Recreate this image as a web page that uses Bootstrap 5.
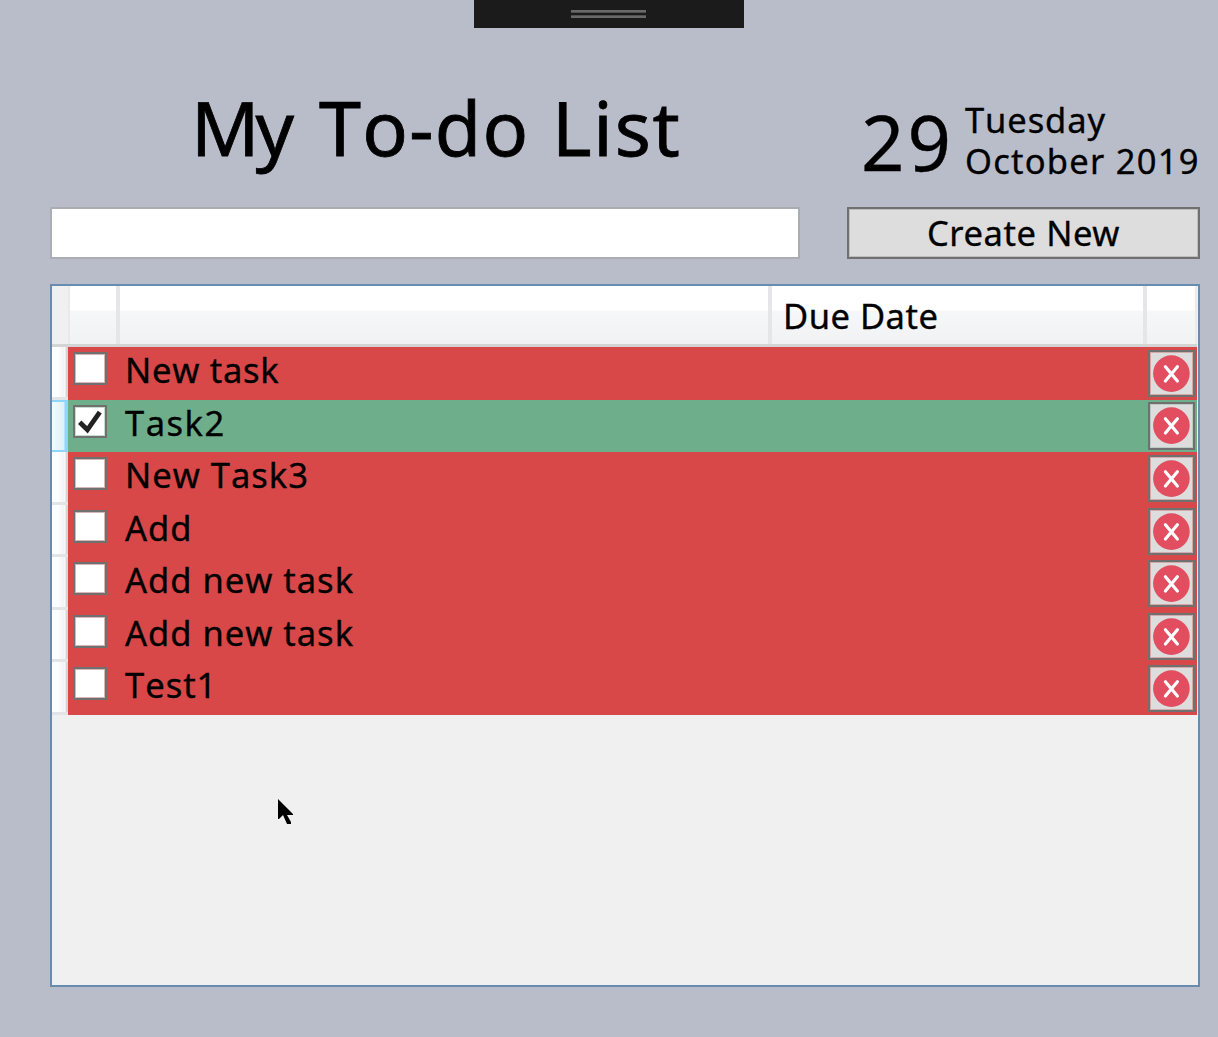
<!DOCTYPE html>
<html lang="en">
<head>
<meta charset="utf-8">
<meta name="viewport" content="width=device-width, initial-scale=1">
<title>My To-do List</title>
<link href="https://cdn.jsdelivr.net/npm/bootstrap@5.3.0/dist/css/bootstrap.min.css" rel="stylesheet">
<style>
body{background:#b9bdc9;color:#000;font-family:"Noto Sans","Open Sans",sans-serif;font-size:34.5px;line-height:41px;letter-spacing:1px;font-kerning:none;-webkit-text-stroke:.35px #000;height:1037px;overflow:hidden}
.grip-bar{width:270px;height:28px;background:#1b1b1b;padding-top:10px;margin-left:474px}
.grip-bar i{display:block;width:75px;height:3px;background:#696969;margin:0 0 2px 97px;border-bottom:1px solid #505050}
.grip-bar i+i{border-bottom:0;border-top:1px solid #505050}
.head-row{height:179px;padding-left:50px}
.main-title{font-size:75.5px;line-height:90px;font-weight:400;padding:54px 0 0 141px;width:811px;white-space:nowrap;-webkit-text-stroke-width:.8px}
.main-title .w-my{width:128px;letter-spacing:-4px}
.main-title .w-todo{width:233px;letter-spacing:1.3px}
.main-title .w-list{letter-spacing:1.8px}
.day-num{font-size:76px;line-height:90px;width:104px;padding-top:69px;letter-spacing:3px}
.day-text{padding-top:71px;white-space:nowrap}
.t-day{letter-spacing:.9px}
.t-mon{letter-spacing:1.25px}
.entry-row{padding-left:50px;gap:47px;height:77px}
.task-input{width:750px;height:52px;border:2px solid #abadb3;border-radius:0;padding:0 8px;background:#fff}
.create-btn{width:353px;height:52px;border:2px solid #707070;border-radius:0;background:#ddd;color:#000;font-size:34.5px;line-height:46px;padding:0;letter-spacing:.6px;box-shadow:inset 0 0 0 1px #bdbdbd}
.task-grid{width:1150px;height:703px;margin-left:50px;border:2px solid #688caf;background:#f0f0f0;padding-right:1px}
.grid-head{height:61px;background:linear-gradient(#fff 0 24px,#f6f7f9 25px,#f0f2f4 58px);border-bottom:3px solid #d4d4d5}
.grid-head>div{border-right:4px solid #e6e6e8}
.grid-head>div:first-child{width:18px;background:#f0f0f0;border-right:2px solid #e9e9eb}
.h-check{width:50px}.h-name{width:652px}.h-due{width:375px;padding:9px 0 0 11px;white-space:nowrap;letter-spacing:.5px}
.grid-head>.h-end{flex:1;border-right:2px solid #ebebed}
.task-row{height:53px}
.task-row:nth-child(even){height:52px}
.row-tab{width:16px;background:linear-gradient(90deg,#fff 0 5px,#f1f2f4 12px,#fff 13px,#d5d5d5 14px);border-bottom:3px solid #e3e4e5}
.row-tab.is-current{background:linear-gradient(90deg,#f4fbfd,#ddf1f6 12px,#8fd4fa 13px);border:solid #8fd4fa;border-width:2px 0}
.row-body{background:#d84848;padding:0 2px 0 5px}
.row-body.is-done{background:#6eae8b}
.tick-box{width:34px;height:33px;margin-top:5px;border:2px solid #707070;border-radius:0;background:#fff;box-shadow:inset 0 0 0 1px #d9b5b5}
.is-done .tick-box{box-shadow:inset 0 0 0 1px #c5dccf}
.task-name{padding:2px 0 0 18px;white-space:nowrap}
.is-done .task-name{letter-spacing:1.5px}
.task-row:first-child .task-name{letter-spacing:.75px}
.del-btn{width:47px;height:47px;margin-top:3px;border:2px solid #707070;border-radius:0;background:#ddd;padding:0;box-shadow:inset 0 0 0 1px #d3a9a9}
.is-done .del-btn{height:48px;margin-top:2px;box-shadow:inset 0 0 0 1px #bcccc3}
.del-btn svg{display:block;margin:auto}
.pointer{position:absolute;left:278px;top:799px}
</style>
</head>
<body>
<div class="grip-bar"><i></i><i></i></div>
<header class="head-row d-flex">
  <h1 class="main-title mb-0 d-flex"><span class="w-my">My </span><span class="w-todo">To-do </span><span class="w-list">List</span></h1>
  <div class="day-num">29</div>
  <div class="day-text"><div class="t-day">Tuesday</div><div class="t-mon">October 2019</div></div>
</header>
<div class="entry-row d-flex">
  <input class="task-input form-control flex-shrink-0" type="text" aria-label="Task">
  <button class="create-btn btn flex-shrink-0" type="button">Create New</button>
</div>
<main class="task-grid">
  <div class="grid-head d-flex"><div></div><div class="h-check"></div><div class="h-name"></div><div class="h-due">Due Date</div><div class="h-end"></div></div>
  <div id="rows"></div>
</main>
<svg class="pointer" width="16" height="27" viewBox="0 0 16 27"><path d="M0 0v20h1l4-4 4 9h4v-2l-4-7h6v-1z"/></svg>
<script>
const tasks=[["New task"],["Task2",true],["New Task3"],["Add"],["Add new task"],["Add new task"],["Test1"]];
const cross='<svg width="38" height="38" viewBox="0 0 38 38"><circle cx="18.4" cy="18.6" r="18.3" fill="#e24d5f"/><path d="M12.4 11.8L24.4 26M24.4 11.8L12.4 26" stroke="#fff" stroke-width="3.2" stroke-linecap="round"/></svg>';
const check='<svg class="d-block" width="30" height="29" viewBox="0 0 30 29"><path d="M4.7 15.2L12.4 22.8L24.8 5.2" fill="none" stroke="#212121" stroke-width="4.8"/></svg>';
document.getElementById('rows').innerHTML=tasks.map(([n,d])=>`<div class="task-row d-flex"><div class="row-tab flex-shrink-0${d?' is-current':''}"></div><div class="row-body d-flex flex-grow-1${d?' is-done':''}"><div class="tick-box flex-shrink-0" role="checkbox" aria-checked="${!!d}">${d?check:''}</div><div class="task-name flex-grow-1">${n}</div><button class="del-btn btn flex-shrink-0" type="button" aria-label="Delete">${cross}</button></div></div>`).join('');
</script>
<script src="https://cdn.jsdelivr.net/npm/bootstrap@5.3.0/dist/js/bootstrap.bundle.min.js"></script>
</body>
</html>
